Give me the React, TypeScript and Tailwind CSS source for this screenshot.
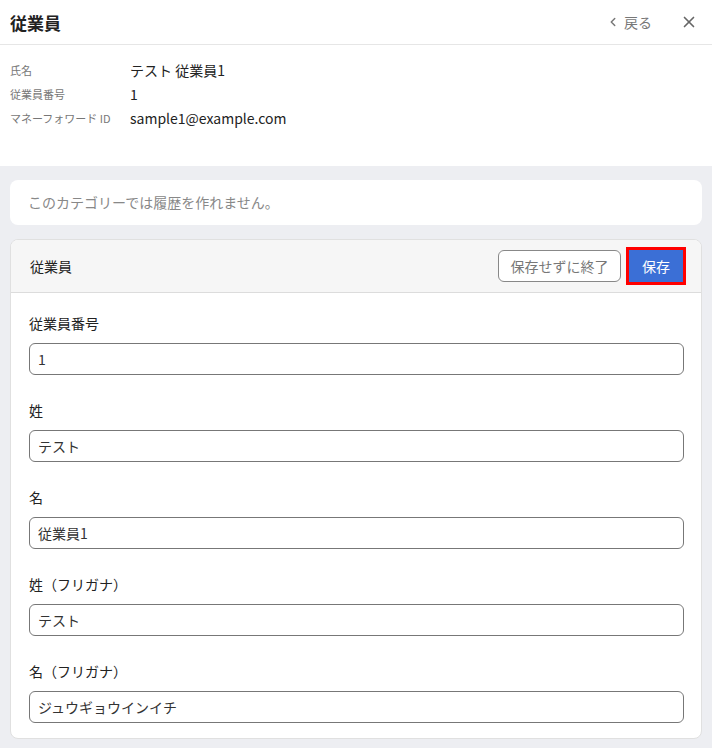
import { ChevronLeft, X } from "lucide-react";

const font = { fontFamily: '"Noto Sans CJK JP", "Noto Sans", sans-serif' };

const info = [
  { label: "氏名", value: "テスト 従業員1" },
  { label: "従業員番号", value: "1" },
  { label: "マネーフォワード ID", value: "sample1@example.com" },
];

const fields = [
  { label: "従業員番号", value: "1" },
  { label: "姓", value: "テスト" },
  { label: "名", value: "従業員1" },
  { label: "姓（フリガナ）", value: "テスト" },
  { label: "名（フリガナ）", value: "ジュウギョウインイチ" },
];

export default function App() {
  return (
    <div className="w-[712px] h-[748px] overflow-hidden bg-white text-[#222]" style={font}>
      <header className="h-[45px] border-b border-[#e6e6e6] flex items-center justify-between pl-[10px] pr-[14px]">
        <h1 className="text-[17px] font-bold leading-none">従業員</h1>
        <div className="flex items-center gap-[28px] text-[#777]">
          <button className="flex items-center gap-[4px] text-[14px]">
            <ChevronLeft className="w-[14px] h-[14px]" strokeWidth={2.5} />
            <span>戻る</span>
          </button>
          <X className="w-[18px] h-[18px] text-[#666]" strokeWidth={2.2} />
        </div>
      </header>

      <dl className="pt-[13px] pb-[36px]">
        {info.map((r) => (
          <div key={r.label} className="h-[24px] flex items-center">
            <dt className="w-[130px] pl-[10px] text-[11px] text-[#777]">{r.label}</dt>
            <dd className="text-[14px] text-[#222]">{r.value}</dd>
          </div>
        ))}
      </dl>

      <div className="bg-[#edeef2] px-[10px] pt-[14px] pb-[20px] flex flex-col gap-[14px]">
        <div className="h-[45px] rounded-[8px] bg-white px-[18px] flex items-center text-[14px] text-[#888]">
          このカテゴリーでは履歴を作れません。
        </div>

        <section className="rounded-[8px] border border-[#e0e0e0] bg-white overflow-hidden">
          <div className="h-[53px] bg-[#f6f6f6] border-b border-[#dcdcdc] flex items-center justify-between pl-[19px] pr-[15px]">
            <h2 className="text-[14px]">従業員</h2>
            <div className="flex items-center gap-[5px]">
              <button className="h-[32px] w-[123px] rounded-[6px] border border-[#888] bg-white text-[14px] text-[#777]">
                保存せずに終了
              </button>
              <button className="h-[38px] w-[60px] border-[3px] border-[#ff0000] bg-[#3b6fd6] text-[14px] text-white">
                保存
              </button>
            </div>
          </div>

          <div className="pl-[18px] pr-[17px] pt-[20px] pb-[15px] flex flex-col gap-[25px]">
            {fields.map((f) => (
              <label key={f.label} className="flex flex-col gap-[10px]">
                <span className="h-[20px] leading-[20px] text-[14px] text-[#222]">{f.label}</span>
                <input
                  readOnly
                  value={f.value}
                  className="h-[32px] rounded-[6px] border border-[#777] px-[8px] text-[14px] text-[#333] outline-none"
                  style={font}
                />
              </label>
            ))}
          </div>
        </section>
      </div>
    </div>
  );
}
